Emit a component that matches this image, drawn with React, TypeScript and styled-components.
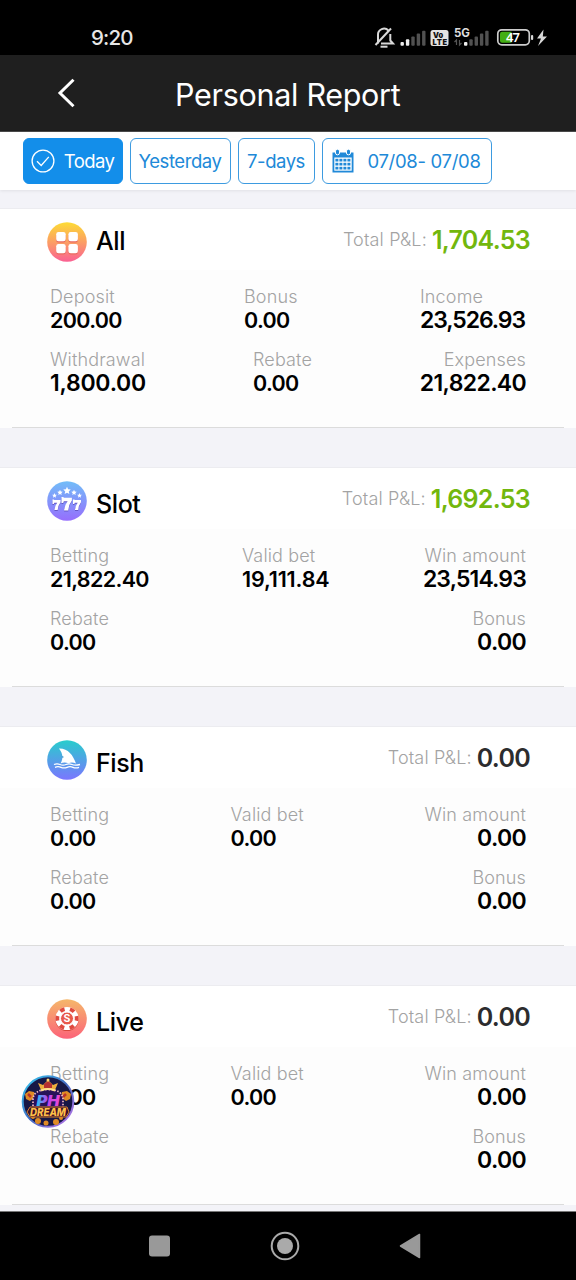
import React from 'react';
import styled, { createGlobalStyle } from 'styled-components';

const GlobalStyle = createGlobalStyle`
  * { box-sizing: border-box; }
  body {
    margin: 0;
    background: #f3f3f8;
    font-family: Inter, "Noto Sans", sans-serif;
    color: #000;
  }
`;

const Screen = styled.div`
  width: 576px;
  height: 1280px;
  display: flex;
  flex-direction: column;
  overflow: hidden;
  position: relative;
  background: #f3f3f8;
`;

const StatusBar = styled.div`
  height: 55px;
  flex: none;
  background: #000;
  color: #e6e6e6;
  display: flex;
  justify-content: space-between;
  padding: 24px 28px 0 91px;
`;

const Clock = styled.span`
  font-size: 20.5px;
  line-height: 28px;
  font-weight: 500;
  letter-spacing: -0.8px;
`;

const Header = styled.header`
  height: 77px;
  flex: none;
  background: #1f1f1f;
  color: #fff;
  display: flex;
  align-items: center;
  border-bottom: 1px solid #4a4a4a;
  padding-left: 56px;
`;

const Title = styled.h1`
  margin: 3px 0 0 97px;
  font-size: 30.5px;
  line-height: 40px;
  font-weight: 400;
  letter-spacing: -0.3px;
  white-space: nowrap;
`;

const Filters = styled.div`
  height: 58px;
  flex: none;
  background: #fff;
  display: flex;
  gap: 7px;
  padding: 6px 23px;
  box-shadow: 0 1px 3px rgba(0, 0, 0, 0.08);
`;

const Filter = styled.button<{ $active?: boolean; $width: number; $spacing?: number }>`
  width: ${p => p.$width}px;
  height: 46px;
  flex: none;
  display: flex;
  align-items: center;
  justify-content: center;
  border: 1px solid ${p => (p.$active ? '#138eea' : '#3d9be0')};
  border-radius: 6px;
  background: ${p => (p.$active ? '#138eea' : '#fff')};
  color: ${p => (p.$active ? '#fff' : '#2089d8')};
  font-family: inherit;
  font-size: 18.5px;
  line-height: 26px;
  padding: 0 1px 0 0;
  letter-spacing: ${p => p.$spacing ?? -0.45}px;
  white-space: nowrap;

  svg { flex: none; }
`;

const Cards = styled.main`
  padding-top: 18px;
  display: flex;
  flex-direction: column;
  gap: 39px;
  height: 1021px;
  flex: none;
  overflow: hidden;
`;

const Card = styled.section`
  height: 220px;
  flex: none;
  background: #fdfdfd;
  border-top: 1px solid #ececf0;
`;

const CardHead = styled.div`
  height: 61px;
  background: #fff;
  display: flex;
  align-items: flex-start;
  padding: 13px 46px 0 47px;

  svg { flex: none; }
`;

const CardTitle = styled.h2<{ $drop: number }>`
  margin: ${p => p.$drop}px 0 0 9px;
  font-size: 25px;
  line-height: 34px;
  font-weight: 500;
  letter-spacing: -0.4px;
`;

const Total = styled.div`
  margin: 0 0 0 auto;
  display: flex;
  align-items: center;
  gap: 5px;
  line-height: 36px;
`;

const TotalLabel = styled.span`
  font-size: 18px;
  font-weight: 350;
  color: #a3a3a3;
  letter-spacing: 0.15px;
`;

const TotalValue = styled.strong<{ $tone: string }>`
  font-size: 25px;
  font-weight: 600;
  color: ${p => p.$tone};
  letter-spacing: -0.7px;
`;

const CardBody = styled.div`
  height: 158px;
  margin: 0 12px;
  padding: 15px 38px 0;
  border-bottom: 1px solid #dcdcdc;
`;

const Row = styled.div`
  height: 63px;
  display: flex;
  justify-content: space-between;
`;

const Metric = styled.div<{ $end?: boolean; $width: number }>`
  width: ${p => p.$width}px;
  display: flex;
  flex-direction: column;
  align-items: ${p => (p.$end ? 'flex-end' : 'flex-start')};
  white-space: nowrap;
`;

const MetricLabel = styled.span`
  font-size: 18px;
  line-height: 23px;
  font-weight: 350;
  color: #a3a3a3;
  letter-spacing: 0.15px;
`;

const MetricValue = styled.span<{ $large?: boolean; $spacing?: number }>`
  font-size: ${p => (p.$large ? 23 : 21.5)}px;
  line-height: 24px;
  font-weight: 600;
  letter-spacing: ${p => p.$spacing ?? -0.65}px;
`;

const NavBar = styled.nav`
  height: 69px;
  flex: none;
  background: #000;
  border-top: 1px solid #777;
  display: flex;
  align-items: center;
  justify-content: space-between;
  padding: 0 155px 1px 148px;
`;

const FloatingBadge = styled.div`
  position: absolute;
  left: 21px;
  top: 1074px;
  width: 54px;
  height: 54px;
`;

const StatusIcons = () => (
  <svg width="176" height="28" viewBox="372 24 176 28" fill="#d8d8d8">
    <g fill="none" stroke="#d8d8d8" strokeWidth="2">
      <path d="M378 43.5v-8.500a6 6 0 0 1 10.500-4.300M390.300 34v6.500l2.700 3H381" />
      <path d="M375.500 45L391 28.500" />
      <path d="M380.500 46.700h7" />
    </g>
    {[0, 1, 2, 3, 4].map(i => (
      <rect key={i} x={400.500 + i * 5.400} y={42 - i * 2.800} width="3.400" height={3.700 + i * 2.800} rx="1" fill={i < 2 ? '#eee' : '#515151'} />
    ))}
    <rect x="430.500" y="30" width="18" height="16" rx="2.500" fill="#e3e3e3" />
    <text x="433" y="37.500" fontSize="7.500" fontWeight="900" fontFamily="Inter, sans-serif" fill="#111">Vo</text>
    <text x="432.500" y="44.700" fontSize="7.500" fontWeight="900" fontFamily="Inter, sans-serif" fill="#111" textLength="14.500">LTE</text>
    <text x="454" y="37" fontSize="11.500" fontWeight="700" fontFamily="Inter, sans-serif" fill="#ddd" textLength="16">5G</text>
    <path d="M456.500 45v-5l-2 2M459.500 40v5l2-2" fill="none" stroke="#555" strokeWidth="1.200" />
    {[0, 1, 2, 3, 4].map(i => (
      <rect key={i} x={464 + i * 5.300} y={42 - i * 2.800} width="3.400" height={3.700 + i * 2.800} rx="1" fill={i < 1 ? '#eee' : '#515151'} />
    ))}
    <rect x="497.800" y="29.800" width="31.500" height="15" rx="4" fill="none" stroke="#ccc" strokeWidth="1.700" />
    <path d="M502 31.800h9.500v11H502q-2 0-2-2v-7q0-2 2-2z" fill="#43ae13" />
    <rect x="531" y="35" width="2.200" height="5" rx="1" />
    <text x="506" y="42" fontSize="13" fontWeight="600" fontFamily="Noto Sans, sans-serif" fill="#fff" textLength="14">47</text>
    <path d="M543.500 29.500L537 38.500h4l-3 7.500 9-9.500h-4.200z" />
  </svg>
);

const BackIcon = () => (
  <svg width="22" height="32" viewBox="0 0 22 32" fill="none" stroke="#fff" strokeWidth="3">
    <path d="M17.500 2.800L4 16l13.500 13.200" />
  </svg>
);

const CheckIcon = () => (
  <svg width="24" height="24" viewBox="0 0 24 24" fill="none" stroke="#fff" strokeWidth="1.300" style={{ marginRight: 9 }}>
    <circle cx="12" cy="12" r="10.900" />
    <path d="M6 12.200l4.200 4.300 7.600-8.600" />
  </svg>
);

const CalendarIcon = () => (
  <svg width="22" height="24" viewBox="0 0 22 24" style={{ marginRight: 13 }}>
    <path d="M.5 3.500h21v20H.5z" fill="#2089d8" />
    <path d="M2.300 8.500h17.400v13.200H2.300z" fill="#fff" />
    <g fill="#2089d8">
      {[0, 1, 2].map(r => [0, 1, 2, 3].map(c => (
        <rect key={`${r}-${c}`} x={3.400 + c * 4} y={9.800 + r * 4} width="3" height="2.700" />
      )))}
    </g>
    <g fill="#2089d8" stroke="#fff" strokeWidth="1">
      <rect x="3.500" y=".3" width="4" height="5.500" rx="1.800" />
      <rect x="14.500" y=".3" width="4" height="5.500" rx="1.800" />
    </g>
  </svg>
);

const Disc = ({ id, from, to, children }: { id: string; from: string; to: string; children: React.ReactNode }) => (
  <svg width="40" height="40" viewBox="0 0 40 40">
    <defs>
      <linearGradient id={id} x1="0" y1="0" x2="0" y2="1">
        <stop offset="0" stopColor={from} />
        <stop offset="1" stopColor={to} />
      </linearGradient>
    </defs>
    <circle cx="20" cy="20" r="19.800" fill={`url(#${id})`} />
    {children}
  </svg>
);

const AllIcon = () => (
  <Disc id="all" from="#fddc35" to="#fa6193">
    {[[9.500, 10.500], [21.700, 10.500], [9.500, 22.500], [21.700, 22.500]].map(([x, y]) => (
      <g key={`${x}-${y}`}>
        <rect x={x - 0.300} y={y + 0.700} width="9.500" height="9.300" rx="2.300" fill="#e96a61" />
        <rect x={x - 0.300} y={y - 0.500} width="9.500" height="9.300" rx="2.300" fill="#fff" />
      </g>
    ))}
  </Disc>
);

const Star = ({ x, y, s }: { x: number; y: number; s: number }) => (
  <path
    transform={`translate(${x} ${y}) scale(${s})`}
    d="M0-3L.9-1 3-.8 1.400.7 1.900 2.800 0 1.700-1.900 2.800-1.400.7-3-.8-.9-1z"
    fill="#fff"
  />
);

const seven = 'M0 0h1.300l.6.500H8v2.200Q5.400 6 5.200 10.500H2Q2.200 6.500 4.700 3.300H1.800L1.300 4.600H0z';

const SlotIcon = () => (
  <Disc id="slot" from="#72bdf8" to="#966efd">
    <Star x={7.500} y={14.500} s={0.800} />
    <Star x={13} y={11.500} s={0.900} />
    <Star x={20} y={9.500} s={1.250} />
    <Star x={27} y={11.500} s={0.900} />
    <Star x={32.500} y={14.500} s={0.800} />
    {['#6657c4', '#fff'].map((c, i) => (
      <g key={c} fill={c} transform={`translate(0 ${1 - i})`}>
        <path transform="translate(5.500 18.500)" d={seven} />
        <path transform="translate(14.500 16) scale(1.300 1.280)" d={seven} />
        <path transform="translate(26 18.500)" d={seven} />
      </g>
    ))}
  </Disc>
);

const FishIcon = () => (
  <Disc id="fish" from="#28cdcc" to="#7b76ff">
    <path d="M12 8.500c9-.3 14 6.500 17 15-3-1.500-5.500-1.300-7.500-.2-3-1.300-5.500-1-8 .2 3-5 2.500-10-1.500-15z" fill="#fff" />
    <path d="M14.700 16.200l1.700.8-1.500.5" fill="none" stroke="#4399cd" strokeWidth=".8" />
    <g fill="none" stroke="#fff" strokeWidth="1.300">
      <path d="M7 24.500q3-1.300 6 0t6 0 6 0 8 0" />
      <path d="M8 27.300q3-1.300 6 0t6 0 6 0 6 0" />
    </g>
  </Disc>
);

const LiveIcon = () => (
  <Disc id="live" from="#f5b76b" to="#fc6379">
    <circle cx="20" cy="20.500" r="11.600" fill="#d7473d" />
    <circle cx="20" cy="19.500" r="11.600" fill="#fff" />
    <circle cx="20" cy="19.500" r="9.700" fill="none" stroke="#df493f" strokeWidth="3.800" strokeDasharray="4.700 5.457" transform="rotate(-14 20 19.500)" />
    <circle cx="20" cy="19.500" r="6.500" fill="#e8594b" stroke="#fff" strokeWidth="1" />
    <text x="20" y="23.300" fontSize="10.500" fontWeight="700" fontFamily="Inter, sans-serif" textAnchor="middle" fill="#fff">S</text>
  </Disc>
);

const DreamBadge = () => (
  <svg width="54" height="54" viewBox="0 0 54 54">
    <defs>
      <linearGradient id="ring" x1="0" y1="0" x2="1" y2="1">
        <stop offset="0" stopColor="#35cdf3" />
        <stop offset=".5" stopColor="#426bc2" />
        <stop offset="1" stopColor="#c675ec" />
      </linearGradient>
      <linearGradient id="ph" x1="0" x2="1">
        <stop offset="0" stopColor="#21c9f6" />
        <stop offset=".45" stopColor="#bc42ed" />
        <stop offset="1" stopColor="#f04bcf" />
      </linearGradient>
    </defs>
    <circle cx="27" cy="27.500" r="25.300" fill="#171746" stroke="url(#ring)" strokeWidth="2" />
    <g fill="#df8b25">
      <path d="M4 20l4-3 5 1 1 5-5 4-4-2z" />
      <path d="M50 20l-4-3-5 1-1 5 5 4 4-2z" />
      <circle cx="17" cy="47" r="3" />
      <circle cx="25" cy="49" r="2.500" />
      <circle cx="35" cy="48" r="3" />
      <circle cx="40" cy="44" r="2" />
      <circle cx="12" cy="43" r="2" />
    </g>
    <path d="M7 20l3 3M45 20l-3 3" stroke="#b9312b" strokeWidth="2.500" />
    <path d="M12 35V25Q13 15.500 27 15.500t15 9.500v10z" fill="#281259" stroke="#f1b8c4" strokeWidth="1.700" strokeDasharray="1.500 1.500" />
    <path d="M20 16l-3-7 5 2 5-5 5 5 5-2-3 7z" fill="#edae3c" />
    <path d="M23 14v-4l4-3 4 3v4z" fill="#b53031" />
    <path d="M20 16.500q7-3 14 0" fill="none" stroke="#ffe092" strokeWidth="2" />
    <circle cx="27" cy="6" r="1.500" fill="#ffd46c" />
    <text x="15.500" y="31.500" fontSize="14.500" fontStyle="italic" fontWeight="900" fontFamily="Inter, sans-serif" fill="url(#ph)" textLength="23" lengthAdjust="spacingAndGlyphs">PH</text>
    <path d="M9 33h37l2 5-3 5H9l-3-5z" fill="#3b1029" stroke="#d68130" strokeWidth="1" />
    <text x="9" y="42" fontSize="10.500" fontStyle="italic" fontWeight="800" fontFamily="Inter, sans-serif" fill="#ffbf48" textLength="36" lengthAdjust="spacingAndGlyphs">DREAM</text>
  </svg>
);

type Item = { label: string; value: string; width: number; large?: boolean; end?: boolean; spacing?: number };
type Report = { name: string; icon: React.ReactNode; total: string; tone: string; drop: number; rows: Item[][] };

const emptyRows: Item[][] = [
  [
    { label: 'Betting', value: '0.00', width: 62 },
    { label: 'Valid bet', value: '0.00', width: 74 },
    { label: 'Win amount', value: '0.00', width: 103, large: true, end: true },
  ],
  [
    { label: 'Rebate', value: '0.00', width: 59 },
    { label: 'Bonus', value: '0.00', width: 54, large: true, end: true },
  ],
];

const reports: Report[] = [
  {
    name: 'All', icon: <AllIcon />, total: '1,704.53', tone: '#72b70d', drop: 2,
    rows: [
      [
        { label: 'Deposit', value: '200.00', width: 72 },
        { label: 'Bonus', value: '0.00', width: 54 },
        { label: 'Income', value: '23,526.93', width: 106, large: true, spacing: -1.1 },
      ],
      [
        { label: 'Withdrawal', value: '1,800.00', width: 96, large: true, spacing: -0.25 },
        { label: 'Rebate', value: '0.00', width: 60 },
        { label: 'Expenses', value: '21,822.40', width: 106, large: true, end: true },
      ],
    ],
  },
  {
    name: 'Slot', icon: <SlotIcon />, total: '1,692.53', tone: '#72b70d', drop: 6,
    rows: [
      [
        { label: 'Betting', value: '21,822.40', width: 99 },
        { label: 'Valid bet', value: '19,111.84', width: 88, spacing: -0.15 },
        { label: 'Win amount', value: '23,514.93', width: 103, large: true, end: true, spacing: -0.85 },
      ],
      emptyRows[1],
    ],
  },
  { name: 'Fish', icon: <FishIcon />, total: '0.00', tone: '#2c2c2e', drop: 6, rows: emptyRows },
  { name: 'Live', icon: <LiveIcon />, total: '0.00', tone: '#2c2c2e', drop: 6, rows: emptyRows },
];

export default function App() {
  return (
    <>
      <GlobalStyle />
      <Screen>
        <StatusBar>
          <Clock>9:20</Clock>
          <StatusIcons />
        </StatusBar>
        <Header>
          <BackIcon />
          <Title>Personal Report</Title>
        </Header>
        <Filters>
          <Filter $active $width={100} $spacing={-0.6}><CheckIcon />Today</Filter>
          <Filter $width={101}>Yesterday</Filter>
          <Filter $width={77}>7-days</Filter>
          <Filter $width={170} $spacing={-0.3}><CalendarIcon />07/08- 07/08</Filter>
        </Filters>
        <Cards>
          {reports.map(r => (
            <Card key={r.name}>
              <CardHead>
                {r.icon}
                <CardTitle $drop={r.drop}>{r.name}</CardTitle>
                <Total>
                  <TotalLabel>Total P&amp;L:</TotalLabel>
                  <TotalValue $tone={r.tone}>{r.total}</TotalValue>
                </Total>
              </CardHead>
              <CardBody>
                {r.rows.map((row, i) => (
                  <Row key={i}>
                    {row.map(m => (
                      <Metric key={m.label} $width={m.width} $end={m.end}>
                        <MetricLabel>{m.label}</MetricLabel>
                        <MetricValue $large={m.large} $spacing={m.spacing}>{m.value}</MetricValue>
                      </Metric>
                    ))}
                  </Row>
                ))}
              </CardBody>
            </Card>
          ))}
        </Cards>
        <NavBar>
          <svg width="22" height="22" viewBox="0 0 22 22"><rect x="1" y=".5" width="21" height="21" rx="3" fill="#999" /></svg>
          <svg width="30" height="30" viewBox="0 0 30 30">
            <circle cx="15" cy="15" r="13.300" fill="none" stroke="#aaa" strokeWidth="2" />
            <circle cx="15" cy="15" r="8" fill="#aaa" />
          </svg>
          <svg width="22" height="26" viewBox="0 0 22 26"><path d="M20.500 1.500v23L1.500 13z" fill="#999" stroke="#999" strokeWidth="1.500" strokeLinejoin="round" /></svg>
        </NavBar>
        <FloatingBadge><DreamBadge /></FloatingBadge>
      </Screen>
    </>
  );
}
